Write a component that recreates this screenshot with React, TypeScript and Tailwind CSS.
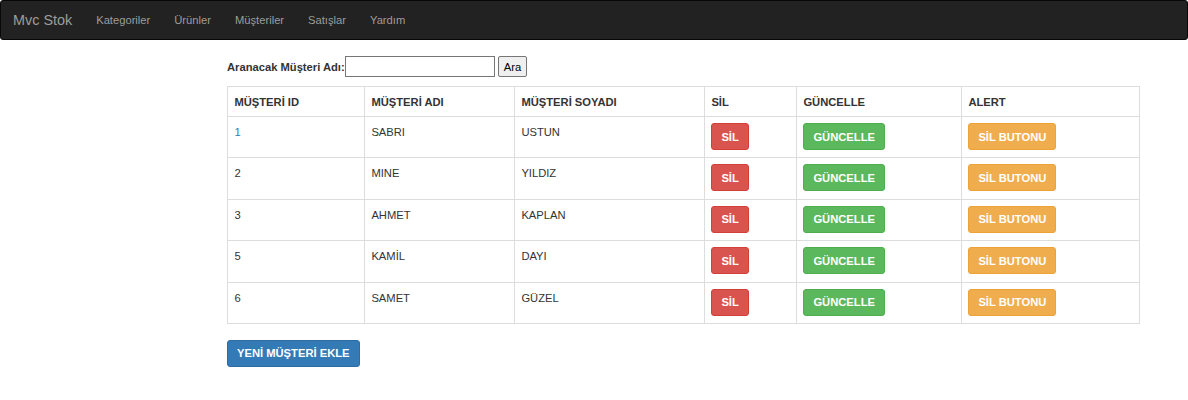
const customers = [
  { id: 1, ad: "SABRI", soyad: "USTUN" },
  { id: 2, ad: "MINE", soyad: "YILDIZ" },
  { id: 3, ad: "AHMET", soyad: "KAPLAN" },
  { id: 5, ad: "KAMİL", soyad: "DAYI" },
  { id: 6, ad: "SAMET", soyad: "GÜZEL" },
];

const navLinks = ["Kategoriler", "Ürünler", "Müşteriler", "Satışlar", "Yardım"];

export default function App() {
  return (
    <div className="min-h-[400px] bg-white text-[11.2px] leading-[16px] text-[#333] font-['Liberation_Sans',Arial,sans-serif]">
      {/* Navbar */}
      <nav className="flex h-10 items-center rounded-[3px] border border-[#080808] bg-[#222]">
        <span className="px-3 text-[14.4px] leading-[16px] text-[#9d9d9d]">Mvc Stok</span>
        {navLinks.map((l) => (
          <a key={l} className="px-3 py-3 text-[#9d9d9d]">
            {l}
          </a>
        ))}
      </nav>

      <div className="pl-[227px] pt-4">
        <div className="w-[912px]">
          {/* Search */}
          <form className="flex h-[21px] items-center">
            <label className="font-bold">Aranacak Müşteri Adı:</label>
            <input className="h-[21px] w-[150px] border border-[#767676] bg-white px-1 outline-none" />
            <button
              type="button"
              className="ml-[3px] h-[21px] rounded-[2px] border border-[#767676] bg-[#efefef] px-[5px] text-black"
            >
              Ara
            </button>
          </form>

          {/* Table */}
          <table className="mt-[9px] w-[912px] table-fixed border-collapse border border-[#ddd]">
            <colgroup>
              <col className="w-[137px]" />
              <col className="w-[150px]" />
              <col className="w-[190px]" />
              <col className="w-[92px]" />
              <col className="w-[165px]" />
              <col className="w-[178px]" />
            </colgroup>
            <thead>
              <tr className="h-[30px]">
                {["MÜŞTERİ ID", "MÜŞTERİ ADI", "MÜŞTERİ SOYADI", "SİL", "GÜNCELLE", "ALERT"].map((h) => (
                  <th key={h} className="border border-[#ddd] px-[6.4px] text-left align-middle font-bold">
                    {h}
                  </th>
                ))}
              </tr>
            </thead>
            <tbody>
              {customers.map((c, i) => (
                <tr key={c.id} className="h-[41.4px]">
                  <td className={`border border-[#ddd] px-[6.4px] pt-[7px] align-top ${i === 0 ? "text-[#337ab7]" : ""}`}>
                    {c.id}
                  </td>
                  <td className="border border-[#ddd] px-[6.4px] pt-[7px] align-top">{c.ad}</td>
                  <td className="border border-[#ddd] px-[6.4px] pt-[7px] align-top">{c.soyad}</td>
                  <td className="border border-[#ddd] px-[6.4px] pt-[6px] align-top">
                    <button className="h-[27px] rounded-[3px] border border-[#d43f3a] bg-[#d9534f] px-[9px] font-bold text-white">
                      SİL
                    </button>
                  </td>
                  <td className="border border-[#ddd] px-[6.4px] pt-[6px] align-top">
                    <button className="h-[27px] rounded-[3px] border border-[#4cae4c] bg-[#5cb85c] px-[9px] font-bold text-white">
                      GÜNCELLE
                    </button>
                  </td>
                  <td className="border border-[#ddd] px-[6.4px] pt-[6px] align-top">
                    <button className="h-[27px] rounded-[3px] border border-[#eea236] bg-[#f0ad4e] px-[9px] font-bold text-white">
                      SİL BUTONU
                    </button>
                  </td>
                </tr>
              ))}
            </tbody>
          </table>

          <button className="mt-[16px] h-[27px] rounded-[3px] border border-[#2e6da4] bg-[#337ab7] px-[9px] font-bold text-white">
            YENİ MÜŞTERİ EKLE
          </button>
        </div>
      </div>
    </div>
  );
}
